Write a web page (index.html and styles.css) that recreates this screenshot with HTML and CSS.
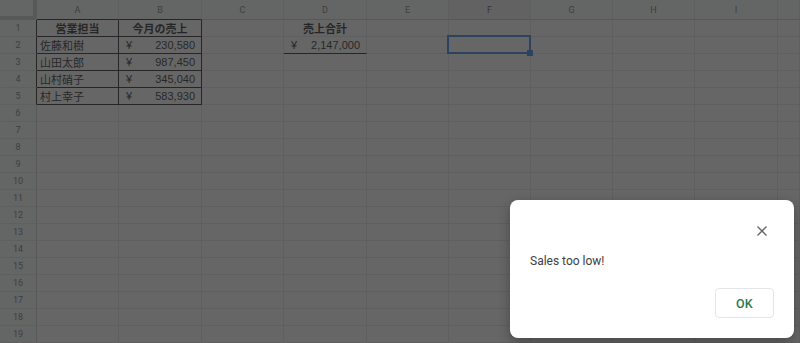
FILE: index.html
```html
<!DOCTYPE html>
<html lang="ja">
<head>
  <meta charset="UTF-8" />
  <meta name="viewport" content="width=device-width, initial-scale=1" />
  <title>Sheet</title>
  <link rel="stylesheet" href="styles.css">
</head>
<body>
  <div class="sheet">
    <div class="row head">
      <div class="corner"></div>
      <div class="ch edge-b">A</div><div class="ch edge-b">B</div><div class="ch">C</div><div class="ch">D</div><div class="ch">E</div>
      <div class="ch active">F</div><div class="ch">G</div><div class="ch">H</div><div class="ch">I</div><div class="ch"></div>
    </div>

    <div class="row">
      <div class="rh edge-r">1</div>
      <div class="c box th">営業担当</div><div class="c box th">今月の売上</div><div class="c"></div>
      <div class="c th">売上合計</div><div class="c"></div><div class="c"></div><div class="c"></div><div class="c"></div><div class="c"></div><div class="c"></div>
    </div>
    <div class="row">
      <div class="rh edge-r">2</div>
      <div class="c box">佐藤和樹</div><div class="c box money"><span>¥</span><span>230,580</span></div><div class="c"></div>
      <div class="c money line"><span>¥</span><span>2,147,000</span></div><div class="c"></div><div class="c selected"></div><div class="c"></div><div class="c"></div><div class="c"></div><div class="c"></div>
    </div>
    <div class="row">
      <div class="rh edge-r">3</div>
      <div class="c box">山田太郎</div><div class="c box money"><span>¥</span><span>987,450</span></div><div class="c"></div>
      <div class="c"></div><div class="c"></div><div class="c"></div><div class="c"></div><div class="c"></div><div class="c"></div><div class="c"></div>
    </div>
    <div class="row">
      <div class="rh edge-r">4</div>
      <div class="c box">山村硝子</div><div class="c box money"><span>¥</span><span>345,040</span></div><div class="c"></div>
      <div class="c"></div><div class="c"></div><div class="c"></div><div class="c"></div><div class="c"></div><div class="c"></div><div class="c"></div>
    </div>
    <div class="row">
      <div class="rh edge-r">5</div>
      <div class="c box">村上幸子</div><div class="c box money"><span>¥</span><span>583,930</span></div><div class="c"></div>
      <div class="c"></div><div class="c"></div><div class="c"></div><div class="c"></div><div class="c"></div><div class="c"></div><div class="c"></div>
    </div>
    <div id="emptyRows"></div>
  </div>

  <div class="scrim"></div>

  <div class="dialog">
    <div class="dialog-head">
      <button class="close" aria-label="Close">
        <svg width="10" height="10" viewBox="0 0 10 10"><path d="M0.5 0.5 L9.5 9.5 M9.5 0.5 L0.5 9.5" stroke="#5f6368" stroke-width="1.3" fill="none"/></svg>
      </button>
    </div>
    <div class="dialog-body">Sales too low!</div>
    <div class="dialog-foot">
      <button class="ok">OK</button>
    </div>
  </div>

  <script>
    // rows 6-19 are empty
    const holder = document.getElementById('emptyRows');
    for (let r = 6; r <= 19; r++) {
      const row = document.createElement('div');
      row.className = 'row';
      row.innerHTML = `<div class="rh">${r}</div>` + '<div class="c"></div>'.repeat(10);
      holder.appendChild(row);
    }
  </script>
</body>
</html>
```

FILE: styles.css
```css
html, body {
  margin: 0;
  height: 100%;
  overflow: hidden;
  background: #fff;
  font-family: 'Liberation Sans', Arial, 'Noto Sans CJK JP', sans-serif;
}

.sheet {
  width: 100%;
}

.row {
  display: grid;
  grid-template-columns: 37px 82px 83px 82px 83px 82px 82px 82px 82px 83px 1fr;
  height: 17px;
}

.row.head {
  height: 20px;
}

.row > div {
  box-sizing: border-box;
  border-right: 1px solid #e2e3e3;
  border-bottom: 1px solid #e2e3e3;
  min-width: 0;
}

/* headers */
.corner {
  background: #f8f9fa;
  border-right: 4px solid #c4c7c5 !important;
  border-bottom: 4px solid #c4c7c5 !important;
}

.ch, .rh {
  background: #f8f9fa;
  color: #5f6368;
  font-family: Roboto, 'Liberation Sans', sans-serif;
  font-size: 9px;
  display: flex;
  align-items: center;
  justify-content: center;
}

.ch {
  border-bottom-color: #c4c7c5 !important;
}

.rh {
  border-right-color: #c4c7c5 !important;
}

.ch.active {
  background: #eef0f2;
  color: #3c4043;
}

.ch.edge-b {
  border-bottom-color: #000 !important;
}

.rh.edge-r {
  border-right-color: #000 !important;
}

/* cells */
.c {
  font-size: 11px;
  color: #000;
  padding: 0 3px;
  display: flex;
  align-items: center;
  white-space: nowrap;
  overflow: hidden;
}

.c.box {
  border-right-color: #000;
  border-bottom-color: #000;
}

.c.th {
  font-weight: bold;
  justify-content: center;
}

.c.money {
  justify-content: space-between;
  padding: 0 6px 0 7px;
}

.c.line {
  border-bottom-color: #000;
}

.c.selected {
  position: relative;
  overflow: visible;
}

/* selection border */
.c.selected::before {
  content: '';
  position: absolute;
  left: -2px;
  top: -2px;
  right: -1px;
  bottom: -1px;
  border: 2px solid #1a73e8;
}

/* fill handle */
.c.selected::after {
  content: '';
  position: absolute;
  right: -3px;
  bottom: -3px;
  width: 6px;
  height: 6px;
  background: #1a73e8;
}

/* modal */
.scrim {
  position: absolute;
  inset: 0;
  background: rgba(51, 51, 51, 0.75);
}

.dialog {
  position: absolute;
  right: 6px;
  bottom: 5px;
  width: 284px;
  box-sizing: border-box;
  padding: 19px 20px 20px 20px;
  background: #fff;
  border-radius: 8px;
  box-shadow: 0 4px 12px rgba(0, 0, 0, 0.3);
  font-family: Roboto, 'Liberation Sans', sans-serif;
}

.dialog-head {
  display: flex;
  justify-content: flex-end;
  height: 24px;
}

.close {
  width: 24px;
  height: 24px;
  padding: 0;
  border: none;
  background: none;
  display: flex;
  align-items: center;
  justify-content: center;
}

.dialog-body {
  margin-top: 8px;
  line-height: 20px;
  font-size: 12px;
  color: #3c4043;
}

.dialog-foot {
  margin-top: 17px;
  display: flex;
  justify-content: flex-end;
}

.ok {
  width: 59px;
  height: 30px;
  border: 1px solid #e3e5e8;
  border-radius: 4px;
  background: #fff;
  color: #2b7a4b;
  font-family: Roboto, 'Liberation Sans', sans-serif;
  font-size: 12.5px;
  font-weight: 500;
  letter-spacing: 0.2px;
}
```
